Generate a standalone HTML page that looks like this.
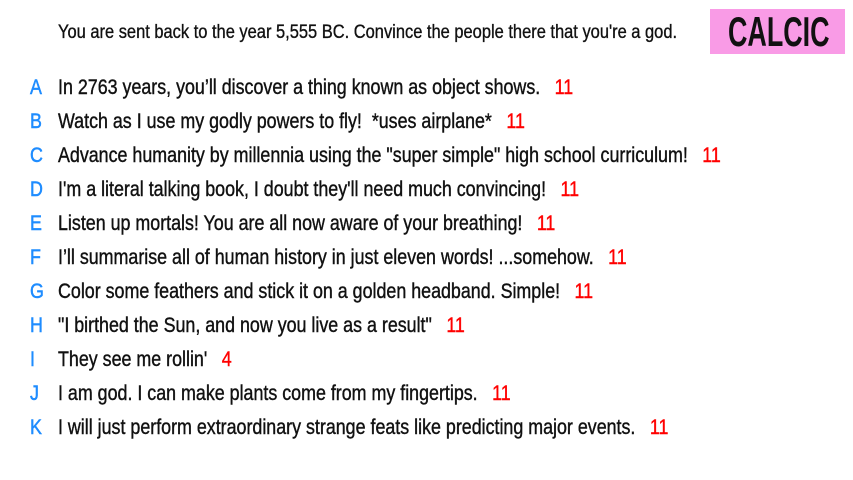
<!DOCTYPE html>
<html><head><meta charset="utf-8"><style>
body{margin:0;width:853px;height:480px;background:#fff;overflow:hidden;position:relative;font-family:"Liberation Sans",sans-serif;color:#111;}
.h{position:absolute;left:58px;top:22px;font-size:19px;white-space:nowrap;-webkit-text-stroke:0.35px #111;transform:scaleX(0.866);transform-origin:0 0;}
.box{position:absolute;left:710px;top:9px;width:135px;height:45px;background:#f99be6;overflow:hidden;}
.box div{position:absolute;left:18px;top:0;line-height:45px;font-size:42px;font-weight:bold;color:#111;white-space:nowrap;transform:scaleX(0.64);transform-origin:0 0;}
.r{position:absolute;left:0;height:30px;line-height:30px;font-size:21px;white-space:nowrap;-webkit-text-stroke:0.4px #111;}
.r b{position:absolute;left:30px;color:#1e8cff;font-weight:normal;-webkit-text-stroke:0.5px #1e8cff;transform:scaleX(0.85);transform-origin:0 0;}
.r span{position:absolute;left:58px;transform:scaleX(0.85);transform-origin:0 0;}
.r i{font-style:normal;color:#f00;-webkit-text-stroke:0.4px #f00;margin-left:17px;}
</style></head><body>
<div class="h">You are sent back to the year 5,555 BC. Convince the people there that you're a god.</div>
<div class="box"><div>CALCIC</div></div>
<div class="r" style="top:73px"><b>A</b><span>In 2763 years, you’ll discover a thing known as object shows.<i>11</i></span></div>
<div class="r" style="top:107px"><b>B</b><span>Watch as I use my godly powers to fly!&nbsp; *uses airplane*<i>11</i></span></div>
<div class="r" style="top:141px"><b>C</b><span>Advance humanity by millennia using the "super simple" high school curriculum!<i>11</i></span></div>
<div class="r" style="top:175px"><b>D</b><span>I'm a literal talking book, I doubt they'll need much convincing!<i>11</i></span></div>
<div class="r" style="top:209px"><b>E</b><span>Listen up mortals! You are all now aware of your breathing!<i>11</i></span></div>
<div class="r" style="top:243px"><b>F</b><span>I’ll summarise all of human history in just eleven words! ...somehow.<i>11</i></span></div>
<div class="r" style="top:277px"><b>G</b><span>Color some feathers and stick it on a golden headband. Simple!<i>11</i></span></div>
<div class="r" style="top:311px"><b>H</b><span>"I birthed the Sun, and now you live as a result"<i>11</i></span></div>
<div class="r" style="top:345px"><b>I</b><span>They see me rollin'<i>4</i></span></div>
<div class="r" style="top:379px"><b>J</b><span>I am god. I can make plants come from my fingertips.<i>11</i></span></div>
<div class="r" style="top:413px"><b>K</b><span>I will just perform extraordinary strange feats like predicting major events.<i>11</i></span></div>
</body></html>
